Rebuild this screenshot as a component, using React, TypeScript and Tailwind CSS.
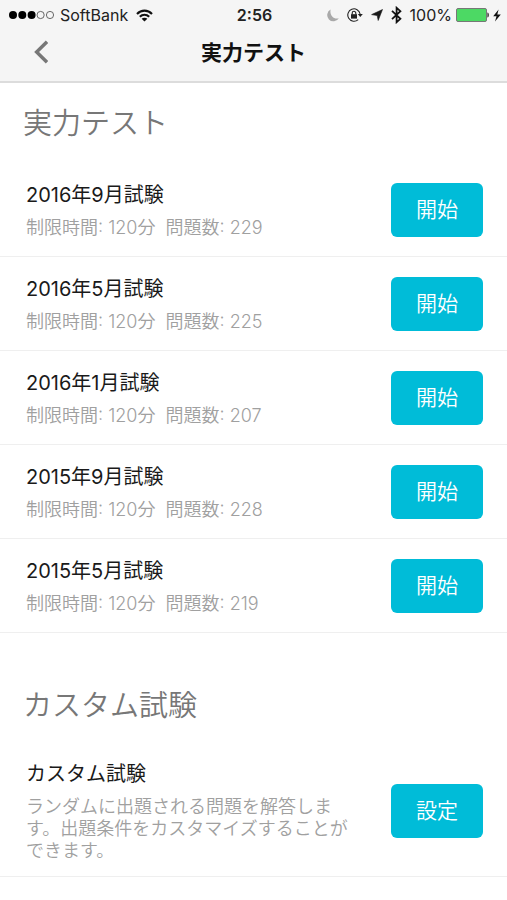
type Exam = { id: string; title: string; minutes: number; count: number };

const exams: Exam[] = [
  { id: "2016-09", title: "2016年9月試験", minutes: 120, count: 229 },
  { id: "2016-05", title: "2016年5月試験", minutes: 120, count: 225 },
  { id: "2016-01", title: "2016年1月試験", minutes: 120, count: 207 },
  { id: "2015-09", title: "2015年9月試験", minutes: 120, count: 228 },
  { id: "2015-05", title: "2015年5月試験", minutes: 120, count: 219 },
];

function SignalDots() {
  return (
    <svg width="46" height="10" viewBox="0 0 46 10" aria-hidden="true">
      <circle cx="5" cy="5" r="4" />
      <circle cx="14.3" cy="5" r="4" />
      <circle cx="23.6" cy="5" r="4" />
      <circle cx="32.6" cy="5" r="3.6" fill="none" stroke="#444" strokeWidth="0.8" />
      <circle cx="42" cy="5" r="3.6" fill="none" stroke="#444" strokeWidth="0.8" />
    </svg>
  );
}

function WifiIcon() {
  return (
    <svg width="17" height="13" viewBox="0 0 17 13" fill="none" stroke="#111" strokeWidth="2.1" aria-hidden="true">
      <path d="M1 4.9C5.2 0.5 11.8 0.5 16 4.9" />
      <path d="M3.8 7.8C6.5 5.1 10.5 5.1 13.2 7.8" />
      <path d="M8.5 12.6 5.6 9.7C7.2 8.3 9.8 8.3 11.4 9.7Z" fill="#111" stroke="none" />
    </svg>
  );
}

function MoonIcon() {
  return (
    <svg width="12" height="13" viewBox="0 0 12 13" fill="#a9a9a9" aria-hidden="true">
      <path d="M3.6 0.6A6.2 6.2 0 1 0 11.8 9.2C7 10.8 2.4 6.6 3.6 0.6Z" />
    </svg>
  );
}

function RotationLockIcon() {
  return (
    <svg width="16" height="14" viewBox="0 0 16 14" fill="none" stroke="#222" aria-hidden="true">
      <path d="M13.1 6A6.2 6.2 0 1 0 11.2 11.6" strokeWidth="1.1" />
      <path d="M10.8 6H15.8L13.3 9Z" fill="#222" stroke="none" />
      <rect x="4" y="6.2" width="6" height="4.4" fill="#222" stroke="none" />
      <path d="M5.2 6.5V5.1A1.8 1.8 0 0 1 8.8 5.1V6.5" strokeWidth="1.1" />
    </svg>
  );
}

function LocationIcon() {
  return (
    <svg width="12" height="12" viewBox="0 0 12 12" fill="#1a1a1a" stroke="#1a1a1a" strokeWidth="0.6" aria-hidden="true">
      <path d="M11.5 0.5 7.2 11.5 6.2 6.6 0.6 5.6Z" />
    </svg>
  );
}

function BluetoothIcon() {
  return (
    <svg width="11" height="18" viewBox="0 0 11 18" fill="none" stroke="#111" strokeWidth="1.8" aria-hidden="true">
      <path d="M1 4.8 9.4 12.8 5.6 16.2V1.8L9.4 5.2 1 13.2" />
    </svg>
  );
}

function BatteryIcon() {
  return (
    <svg width="33" height="14" viewBox="0 0 33 14" aria-hidden="true">
      <rect x="0.5" y="0.5" width="30" height="13" rx="1.5" fill="#4cd964" stroke="#777" />
      <path d="M31.4 4.5C33.4 4.8 33.4 9.2 31.4 9.5Z" fill="#333" />
    </svg>
  );
}

function BoltIcon() {
  return (
    <svg width="8" height="13" viewBox="0 0 8 13" fill="#111" aria-hidden="true">
      <path d="M5.6 0.4 0.2 7.2H3.5L2 12.6 7.8 5.4H4.3Z" />
    </svg>
  );
}

function StatusBar() {
  return (
    <div className="grid h-[30px] grid-cols-[1fr_auto_1fr] items-center pr-1.5 pl-2 text-base leading-[30px] text-[#222]">
      <div className="flex items-center">
        <SignalDots />
        <span className="mr-2 ml-1.5">SoftBank</span>
        <WifiIcon />
      </div>
      <span className="font-semibold">2:56</span>
      <div className="flex items-center justify-end">
        <MoonIcon />
        <span className="ml-2"><RotationLockIcon /></span>
        <span className="ml-2"><LocationIcon /></span>
        <span className="ml-2"><BluetoothIcon /></span>
        <span className="mr-1 ml-2">100%</span>
        <BatteryIcon />
        <span className="ml-1"><BoltIcon /></span>
      </div>
    </div>
  );
}

function SectionHeading({ children }: { children: string }) {
  return <h2 className="px-[23px] pt-[21px] pb-[19px] text-[29px] leading-10 font-[350] text-[#777]">{children}</h2>;
}

function ExamRow({ title, detail, action }: { title: string; detail: string; action: string }) {
  return (
    <li className="flex items-center justify-between border-b border-[#efefef] pt-[15px] pr-6 pb-3.5 pl-[26px]">
      <div className="w-[326px]">
        <h3 className="text-xl leading-7 text-[#1a1a1a]">{title}</h3>
        <p className="mt-2 text-lg leading-[22px] font-[350] whitespace-pre-wrap text-[#a0a0a0]">{detail}</p>
      </div>
      <button
        type="button"
        aria-label={`${title} ${action}`}
        className="my-[5px] h-[54px] w-[92px] shrink-0 rounded-md bg-[#00bcd8] text-[21px] font-[350] text-white"
      >
        {action}
      </button>
    </li>
  );
}

export default function App() {
  return (
    <div className="min-h-screen bg-white font-['Inter','Noto_Sans_CJK_JP',sans-serif]" lang="ja">
      <header className="border-b-2 border-[#dcdcdc] bg-[#f5f5f5]">
        <StatusBar />
        <div className="grid h-[51px] grid-cols-[1fr_auto_1fr] items-start px-8">
          <button type="button" aria-label="戻る" className="flex h-11 w-6 items-center">
            <svg width="16" height="24" viewBox="0 0 16 24" fill="none" stroke="#777" strokeWidth="3.4" aria-hidden="true">
              <path d="M15 1.8 4.6 12 15 22.2" />
            </svg>
          </button>
          <h1 className="text-[21px] leading-[46px] font-bold text-[#111]">実力テスト</h1>
        </div>
      </header>
      <main>
        <section>
          <SectionHeading>実力テスト</SectionHeading>
          <ul>
            {exams.map((exam) => (
              <ExamRow
                key={exam.id}
                title={exam.title}
                detail={`制限時間: ${exam.minutes}分  問題数: ${exam.count}`}
                action="開始"
              />
            ))}
          </ul>
        </section>
        <section className="mt-8">
          <SectionHeading>カスタム試験</SectionHeading>
          <ul>
            <ExamRow
              title="カスタム試験"
              detail="ランダムに出題される問題を解答します。出題条件をカスタマイズすることができます。"
              action="設定"
            />
          </ul>
        </section>
      </main>
    </div>
  );
}
